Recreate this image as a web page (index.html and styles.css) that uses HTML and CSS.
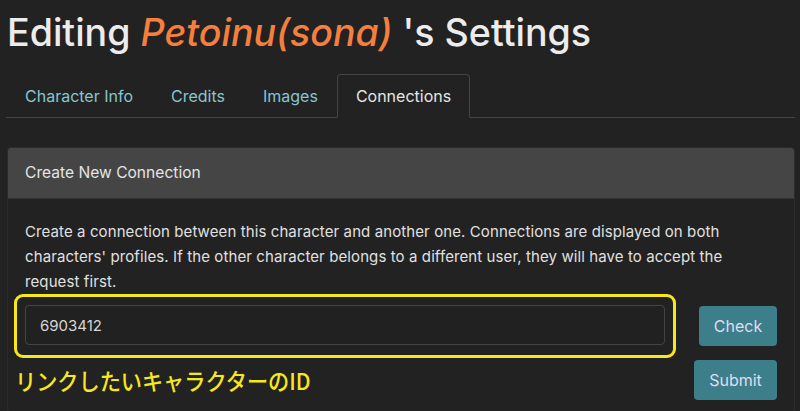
FILE: index.html
```html
<!DOCTYPE html>
<html lang="en">

<head>
    <meta charset="UTF-8">
    <meta name="viewport" content="width=device-width, initial-scale=1.0">
    <title>Edit Character</title>
    <link rel="stylesheet" href="styles.css">
</head>

<body>
    <h1 class="page_title">Editing <em>Petoinu(sona)</em> 's Settings</h1>

    <ul class="tabs">
        <li><a href="#">Character Info</a></li>
        <li><a href="#">Credits</a></li>
        <li><a href="#">Images</a></li>
        <li class="on"><a href="#">Connections</a></li>
    </ul>

    <div class="card">
        <div class="card_header">Create New Connection</div>
        <div class="card_body">
            <p class="desc">Create a connection between this character and another one. Connections are displayed on both characters' profiles. If the other character belongs to a different user, they will have to accept the request first.</p>

            <div class="form_row">
                <div class="mark_box">
                    <input class="id_input" type="text" value="6903412">
                </div>
                <button class="btn btn_check" type="button">Check</button>
            </div><!-- .form_row end -->

            <div class="form_row">
                <p class="note">リンクしたいキャラクターのID</p>
                <button class="btn btn_submit" type="button">Submit</button>
            </div><!-- .form_row end -->
        </div><!-- .card_body end -->
    </div><!-- .card end -->
</body>

</html>
```

FILE: styles.css
```css
@charset "utf-8";

* {
    margin: 0;
    padding: 0;
    box-sizing: border-box;
}

li {
    list-style: none;
}

a {
    text-decoration: none;
    color: inherit;
}

body {
    background-color: #222;
    color: #ddd;
    font-family: Inter, "Noto Sans", sans-serif;
    padding: 0 5px 0 7px;
    overflow: hidden;
}

.page_title {
    font-size: 37.6px;
    font-weight: 500;
    line-height: 46px;
    color: #ececec;
    padding-top: 10px;
    margin-bottom: 18px;
}

.page_title em {
    color: #f47f3e;
}

/* 탭 */
.tabs {
    display: flex;
    border-bottom: 1px solid #444;
    margin-left: -1px;
}

.tabs li {
    margin-bottom: -1px;
    border: 1px solid transparent;
    border-radius: 4px 4px 0 0;
}

.tabs li a {
    display: block;
    padding: 9px 18px;
    font-size: 16px;
    line-height: 24px;
    color: #86c6cf;
}

.tabs li.on {
    border-color: #444 #444 #222;
    background-color: #222;
}

.tabs li.on a {
    color: #e6e6e6;
}

/* 카드 */
.card {
    margin-top: 29px;
    border: 1px solid #2c2c2c;
    border-radius: 4px;
}

.card_header {
    background-color: #454545;
    border-bottom: 1px solid #333;
    border-radius: 3px 3px 0 0;
    padding: 0 17px;
    height: 51px;
    line-height: 50px;
    font-size: 15.6px;
    color: #e4e4e4;
}

.card_body {
    padding: 20px 17px 12px;
}

.desc {
    font-size: 15px;
    line-height: 25px;
    letter-spacing: 0.1px;
    color: #e0e0e0;
}

.form_row {
    display: flex;
    align-items: center;
    justify-content: space-between;
}

.form_row + .form_row {
    margin-top: 2px;
}

.mark_box {
    flex: 1;
    margin-left: -11px;
    margin-right: 23px;
    padding: 8px 8px 10px;
    border: 3px solid #f7e81c;
    border-radius: 9px;
}

.id_input {
    display: block;
    width: 100%;
    height: 40px;
    padding: 0 14px;
    background-color: #212121;
    border: 1px solid #444;
    border-radius: 4px;
    color: #d6d6d6;
    font-family: inherit;
    font-size: 15px;
}

.btn {
    height: 40px;
    padding: 0 14px;
    border: 0;
    border-radius: 4px;
    background-color: #3d7e8b;
    color: #dde;
    font-family: inherit;
    font-size: 16px;
}

.btn_check {
    width: 78px;
}

.btn_submit {
    width: 83px;
}

.note {
    margin-left: -10px;
    font-family: "Noto Sans CJK JP", sans-serif;
    font-size: 23px;
    font-weight: 500;
    color: #f7e81c;
    transform: scaleX(0.92);
    transform-origin: left center;
}
```
